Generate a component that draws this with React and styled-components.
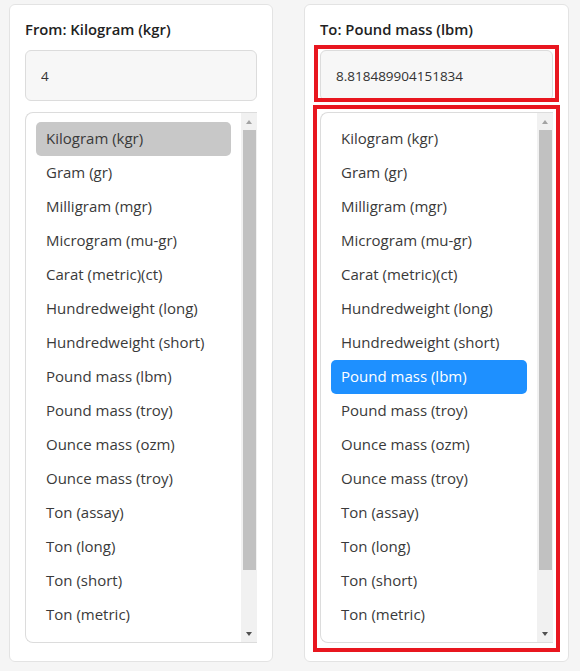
import React, { useState } from "react";
import styled, { createGlobalStyle } from "styled-components";

const units = [
  "Kilogram (kgr)",
  "Gram (gr)",
  "Milligram (mgr)",
  "Microgram (mu-gr)",
  "Carat (metric)(ct)",
  "Hundredweight (long)",
  "Hundredweight (short)",
  "Pound mass (lbm)",
  "Pound mass (troy)",
  "Ounce mass (ozm)",
  "Ounce mass (troy)",
  "Ton (assay)",
  "Ton (long)",
  "Ton (short)",
  "Ton (metric)",
  "Slug (slug)",
  "Stone (st)",
];

const VIEW_H = 529;
const CONTENT_H = units.length * 34 + 18;
const TRACK_H = VIEW_H - 32;
const THUMB_H = 440;

const GlobalStyle = createGlobalStyle`
  body {
    margin: 0;
    background: #f5f5f5;
    font-family: "Open Sans", "Noto Sans", sans-serif;
    color: #333;
  }
`;

const Page = styled.div`
  display: grid;
  grid-template-columns: 264px 265px;
  gap: 31px;
  padding: 4px 0 0 9px;
`;

const Card = styled.div`
  display: flex;
  flex-direction: column;
  gap: 11px;
  height: 658px;
  box-sizing: border-box;
  background: #fff;
  border: 1px solid #e3e3e3;
  border-radius: 6px;
  padding: 14px 15px 18px 15px;
`;

const Title = styled.h3`
  margin: 0;
  font-size: 14.8px;
  line-height: 20px;
  font-weight: 600;
  color: #222;
`;

const Marked = styled.div`
  position: relative;

  &::after {
    content: "";
    position: absolute;
    pointer-events: none;
    border: 4px solid #e8161f;
    left: ${({ $l }) => $l}px;
    right: ${({ $r }) => $r}px;
    top: ${({ $t }) => $t}px;
    bottom: ${({ $b }) => $b}px;
  }
`;

const Input = styled.input`
  display: block;
  width: 100%;
  height: 51px;
  box-sizing: border-box;
  padding: 0 15px;
  background: #f7f7f7;
  border: 1px solid #dcdcdc;
  border-radius: 6px;
  font-family: inherit;
  font-size: 13.5px;
  color: #333;
  outline: none;
`;

const ListBox = styled.div`
  display: flex;
  height: 531px;
  box-sizing: border-box;
  border: 1px solid #dcdcdc;
  border-right: none;
  border-radius: 8px 0 0 8px;
  background: #fff;
`;

const Viewport = styled.div`
  flex: 1;
  overflow-y: auto;
  padding: 9px 10px;
  scrollbar-width: none;

  &::-webkit-scrollbar {
    display: none;
  }
`;

const Scrollbar = styled.div`
  display: flex;
  flex-direction: column;
  width: 16px;
  background: #f1f1f1;
`;

const ArrowButton = styled.div`
  height: 16px;
  display: flex;
  align-items: center;
  justify-content: center;

  &::before {
    content: "";
    border-left: 3.5px solid transparent;
    border-right: 3.5px solid transparent;
    ${({ $dir }) =>
      $dir === "up"
        ? "border-bottom: 4px solid #a3a3a3; margin-top: 1px;"
        : "border-top: 4px solid #505050; margin-bottom: 0;"}
  }
`;

const Track = styled.div`
  flex: 1;
  padding: 1px 1px 0 2px;
`;

const Thumb = styled.div`
  height: ${THUMB_H}px;
  background: #c1c1c1;
`;

const Option = styled.div`
  height: 34px;
  box-sizing: border-box;
  line-height: 32px;
  padding: 0 10px 2px;
  border-radius: 5px;
  font-size: 15px;
  white-space: nowrap;
  cursor: pointer;
  color: ${({ $sel }) => ($sel === "blue" ? "#fff" : "#3a3a3a")};
  background: ${({ $sel }) =>
    $sel === "blue" ? "#1e90ff" : $sel === "gray" ? "#c8c8c8" : "transparent"};
`;

function UnitList({ selected, tone }) {
  const [scroll, setScroll] = useState(0);
  const maxScroll = CONTENT_H - VIEW_H;
  const thumbTop = maxScroll > 0 ? (scroll / maxScroll) * (TRACK_H - THUMB_H - 1) : 0;

  return (
    <ListBox>
      <Viewport onScroll={(e) => setScroll(e.currentTarget.scrollTop)}>
        {units.map((u) => (
          <Option key={u} $sel={u === selected ? tone : undefined}>
            {u}
          </Option>
        ))}
      </Viewport>
      <Scrollbar>
        <ArrowButton $dir="up" />
        <Track>
          <Thumb style={{ marginTop: thumbTop }} />
        </Track>
        <ArrowButton $dir="down" />
      </Scrollbar>
    </ListBox>
  );
}

export default function App() {
  const [value, setValue] = useState("4");
  const result = "8.818489904151834";

  return (
    <>
      <GlobalStyle />
      <Page>
        <Card>
          <Title>From: Kilogram (kgr)</Title>
          <Input value={value} onChange={(e) => setValue(e.target.value)} />
          <UnitList selected="Kilogram (kgr)" tone="gray" />
        </Card>
        <Card>
          <Title>To: Pound mass (lbm)</Title>
          <Marked $l={-6} $r={-6} $t={-5} $b={-1}>
            <Input value={result} readOnly />
          </Marked>
          <Marked $l={-7} $r={-7} $t={-7} $b={-9}>
            <UnitList selected="Pound mass (lbm)" tone="blue" />
          </Marked>
        </Card>
      </Page>
    </>
  );
}
